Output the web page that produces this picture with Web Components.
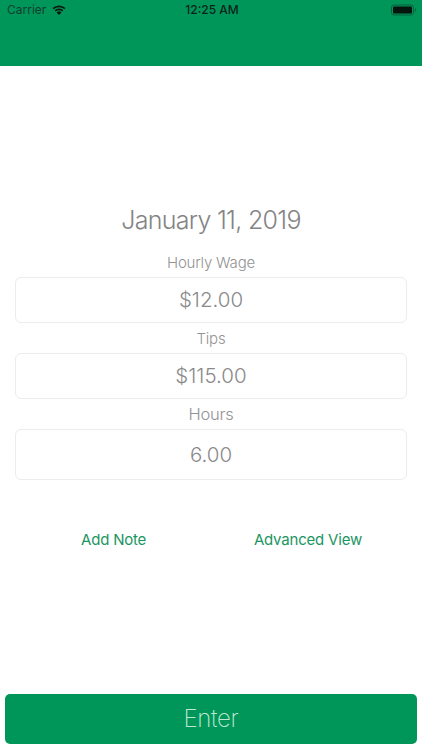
<!DOCTYPE html>
<html><head><meta charset="utf-8"><style>
html,body{margin:0;padding:0;background:#fff}
body{width:422px;height:750px;overflow:hidden;font-family:Inter,"Liberation Sans",sans-serif}
</style></head><body>
<app-screen>
<status-header></status-header>
<date-title>January 11, 2019</date-title>
<wage-field label="Hourly Wage" value="$12.00"></wage-field>
<wage-field label="Tips" value="$115.00"></wage-field>
<wage-field label="Hours" value="6.00" tall></wage-field>
<link-row><span>Add Note</span><span>Advanced View</span></link-row>
<enter-button>Enter</enter-button>
</app-screen>
<script>
function def(name, html){
  customElements.define(name, class extends HTMLElement{
    constructor(){super();this.attachShadow({mode:'open'}).innerHTML=html(this);}
  });
}
def('app-screen',()=>`<style>:host{display:flex;flex-direction:column;width:422px;height:750px}</style><slot></slot>`);
def('status-header',()=>`<style>
:host{display:block;height:65.5px;background:#00965a;color:#0c2a1c;font:400 12px/1 Inter,"Liberation Sans",sans-serif}
.bar{display:grid;grid-template-columns:1fr auto 1fr;align-items:center;height:20px;padding:0 5px 0 7px}
.l{display:flex;align-items:center;gap:6px;color:#12402c}
.t{font-weight:500;color:#0a2418;font-size:12px}
.r{display:flex;justify-content:flex-end}
svg{display:block}
</style><div class="bar"><div class="l"><span>Carrier</span>
<svg width="14" height="10" viewBox="0 0 14 10"><path d="M7 10 4.6 7.4a3.4 3.4 0 0 1 4.8 0z" fill="#06180f"/><path d="M3.3 5.9a5.2 5.2 0 0 1 7.4 0" fill="none" stroke="#06180f" stroke-width="1.7"/><path d="M1.1 3.7a8.4 8.4 0 0 1 11.8 0" fill="none" stroke="#06180f" stroke-width="1.7"/></svg></div>
<div class="t">12:25 AM</div>
<div class="r"><svg width="27" height="12" viewBox="0 0 27 12"><rect x="1.5" y="1" width="22" height="10" rx="2.5" fill="none" stroke="#0a5c3a" stroke-width="1"/><rect x="3" y="2.5" width="19" height="7" rx="1.2" fill="#04150d"/><path d="M25 4.3c.8.2 1.2.8 1.2 1.7s-.4 1.5-1.2 1.7z" fill="#0a5c3a"/></svg></div></div>`);
def('date-title',()=>`<style>:host{display:block;margin-top:139.5px;margin-bottom:12px;text-align:center;font:300 25px/30px Inter,"Liberation Sans",sans-serif;letter-spacing:-.7px;color:#848484}</style><slot></slot>`);
def('wage-field',(h)=>`<style>
:host{display:block;margin:0 15px;text-align:center}
.l{box-sizing:border-box;padding-top:1px;font:300 ${h.hasAttribute('tall')?16.5:15}px/29px Inter,"Liberation Sans",sans-serif;letter-spacing:-.2px;color:#939393;height:30px}
.b{box-sizing:border-box;height:${h.hasAttribute('tall')?51:46}px;border:1px solid #ececec;border-radius:6px;display:flex;align-items:center;justify-content:center;font:300 20.5px/24px Inter,"Liberation Sans",sans-serif;color:#8a8a8a;background:#fff}
</style><div class="l">${h.getAttribute('label')}</div><div class="b">${h.getAttribute('value')}</div>`);
def('link-row',()=>`<style>
:host{display:flex;justify-content:space-between;align-items:flex-start;padding:0 60px 0 81px;margin-top:50px;font:400 15px/20px Inter,"Liberation Sans",sans-serif;letter-spacing:-.2px;color:#1b9562;flex:1}
</style><slot></slot>`);
def('enter-button',()=>`<style>
:host{display:flex;align-items:center;justify-content:center;box-sizing:border-box;height:50.5px;margin:0 5px 6px;border-radius:5px;background:#00965a;color:#bfe8d4;font:200 24px/28px Inter,"Liberation Sans",sans-serif;letter-spacing:-.3px}
</style><slot></slot>`);
</script>
</body></html>
